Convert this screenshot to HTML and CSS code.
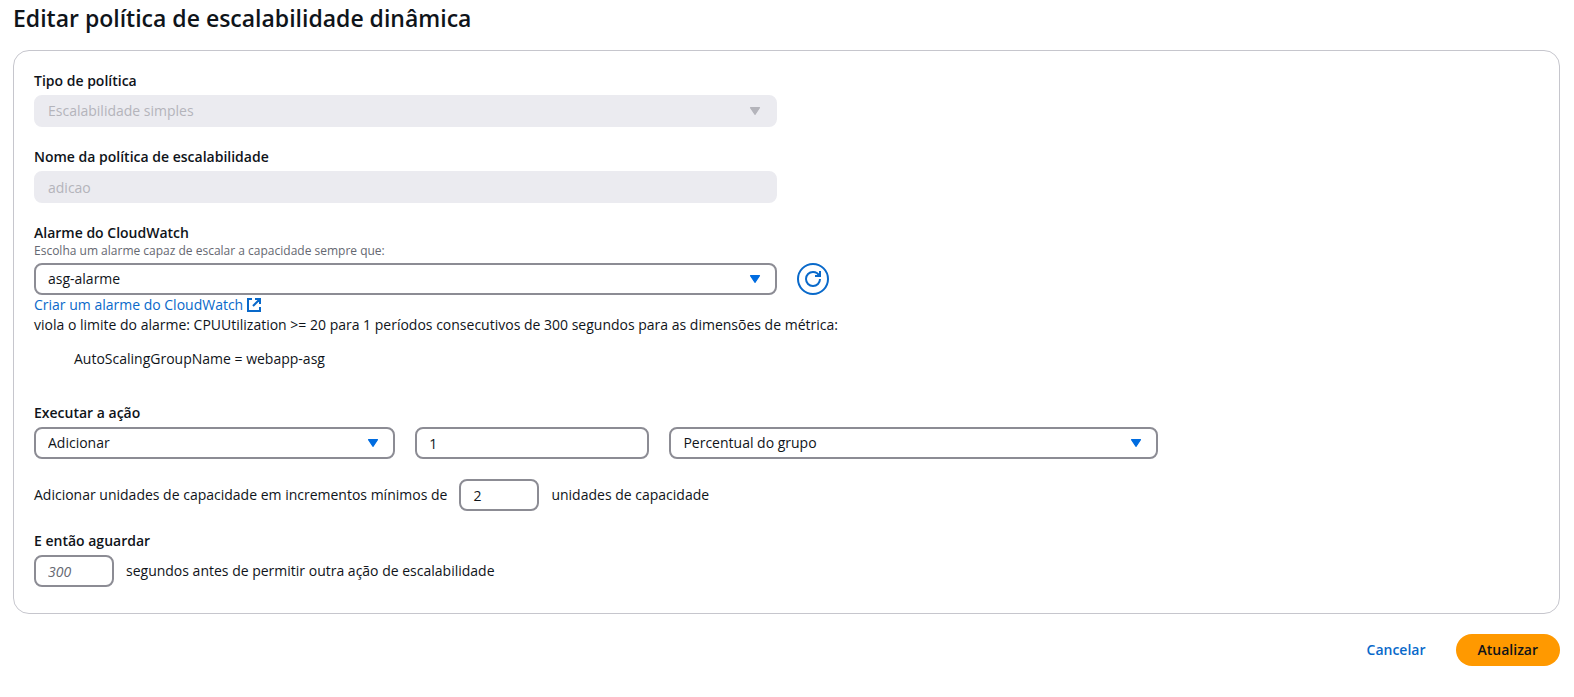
FILE: index.html
```html
<!DOCTYPE html>
<html lang="pt-BR">
<head>
<meta charset="utf-8">
<title>Editar política de escalabilidade dinâmica</title>
<link rel="stylesheet" href="styles.css">
</head>
<body>
<form class="page">
  <h1 class="title">Editar política de escalabilidade dinâmica</h1>
  <section class="panel">
    <div class="field">
      <label class="label" for="type">Tipo de política</label>
      <div class="row">
        <div class="select-box wide disabled">
          <select class="control" id="type" disabled><option>Escalabilidade simples</option></select>
          <svg class="caret" viewBox="0 0 16 16" aria-hidden="true"><path d="M4 5h8l-4 6z"/></svg>
        </div>
      </div>
    </div>
    <div class="field">
      <label class="label" for="name">Nome da política de escalabilidade</label>
      <div class="row">
        <input class="control wide" id="name" type="text" value="adicao" disabled>
      </div>
    </div>
    <div class="field alarm">
      <label class="label" for="alarm">Alarme do CloudWatch</label>
      <p class="hint">Escolha um alarme capaz de escalar a capacidade sempre que:</p>
      <div class="row">
        <div class="select-box wide">
          <select class="control" id="alarm"><option>asg-alarme</option></select>
          <svg class="caret" viewBox="0 0 16 16" aria-hidden="true"><path d="M4 5h8l-4 6z"/></svg>
        </div>
        <button class="refresh" type="button" aria-label="Atualizar alarmes">
          <svg viewBox="0 0 16 16" aria-hidden="true"><path d="M10 5h5V0"/><path d="M15 8a6.960 6.960 0 0 1-7 7 6.960 6.960 0 0 1-7-7 6.960 6.960 0 0 1 7-7 6.870 6.870 0 0 1 6.300 4"/></svg>
        </button>
      </div>
      <a class="link" href="#">Criar um alarme do CloudWatch <svg viewBox="0 0 14 14" aria-hidden="true"><path d="M5 1H1v12h12V9M8 1h5v5M13 1 6 8"/></svg></a>
      <p class="text">viola o limite do alarme: CPUUtilization &gt;= 20 para 1 períodos consecutivos de 300 segundos para as dimensões de métrica:</p>
      <p class="dimension">AutoScalingGroupName = webapp-asg</p>
    </div>
    <div class="field">
      <label class="label" for="action">Executar a ação</label>
      <div class="row">
        <div class="select-box action">
          <select class="control" id="action"><option>Adicionar</option></select>
          <svg class="caret" viewBox="0 0 16 16" aria-hidden="true"><path d="M4 5h8l-4 6z"/></svg>
        </div>
        <input class="control amount" type="text" value="1" aria-label="Quantidade">
        <div class="select-box unit">
          <select class="control" aria-label="Unidade"><option>Percentual do grupo</option></select>
          <svg class="caret" viewBox="0 0 16 16" aria-hidden="true"><path d="M4 5h8l-4 6z"/></svg>
        </div>
      </div>
    </div>
    <div class="field inline">
      <label for="step">Adicionar unidades de capacidade em incrementos mínimos de</label>
      <input class="control small" id="step" type="text" value="2">
      <span>unidades de capacidade</span>
    </div>
    <div class="field">
      <label class="label" for="wait">E então aguardar</label>
      <div class="inline">
        <input class="control small" id="wait" type="text" placeholder="300">
        <span>segundos antes de permitir outra ação de escalabilidade</span>
      </div>
    </div>
  </section>
  <footer class="actions">
    <button class="button" type="button">Cancelar</button>
    <button class="button primary" type="button">Atualizar</button>
  </footer>
</form>
</body>
</html>
```
FILE: styles.css
```css
* { box-sizing: border-box; }
body { margin: 0; background: #fff; color: #0f141a; font: 14px/20px "Open Sans", "Noto Sans", sans-serif; }
h1, p { margin: 0; }
.page { padding: 3px 14px 0 13px; }
.title { font-size: 23px; line-height: 30px; font-weight: 600; }
.panel { margin-top: 17px; padding: 20px 20px 26px; border: 1px solid #c6c6cd; border-radius: 16px; }
.field + .field { margin-top: 20px; }
.label { display: block; width: fit-content; font-weight: 600; margin-bottom: 4px; }
.alarm .label { margin-bottom: 0; }
.hint { color: #656871; font-size: 12px; line-height: 16px; margin-bottom: 4px; }
.control { display: block; width: 100%; height: 32px; padding: 4px 12px; border: 2px solid #8c8c94; border-radius: 8px; background: #fff; color: inherit; font: inherit; appearance: none; }
.control:disabled { opacity: 1; border-color: #ebebf0; background: #ebebf0; color: #b4b4bb; }
.control::placeholder { color: #656871; font-style: italic; opacity: 1; }
.select-box { display: grid; align-items: center; }
.select-box > * { grid-area: 1 / 1; }
.caret { justify-self: end; width: 18px; height: 18px; margin-right: 13px; fill: #006ce0; stroke: #006ce0; stroke-linejoin: round; pointer-events: none; }
.disabled .caret { fill: #b4b4bb; stroke: #b4b4bb; }
.row { display: grid; grid-template-columns: repeat(12, minmax(0, 1fr)); column-gap: 20px; }
.wide { grid-column: span 6; }
.action { grid-column: span 3; }
.amount { grid-column: span 2; }
.unit { grid-column: span 4; }
.control.small { width: 80px; }
.inline { display: flex; align-items: center; gap: 12px; }
.refresh { width: 32px; height: 32px; padding: 6px; border: 2px solid #0969ca; border-radius: 50%; background: #fff; }
.refresh svg { display: block; width: 16px; height: 16px; }
.refresh path, .link path { fill: none; stroke: #0969ca; stroke-width: 2; }
.link { display: flex; width: fit-content; align-items: center; gap: 4px; color: #0969ca; text-decoration: none; }
.link svg { width: 14px; height: 14px; }
.dimension { margin: 14px 0 0 40px; padding-bottom: 14px; }
.actions { display: flex; justify-content: flex-end; gap: 8px; margin-top: 20px; }
.button { height: 32px; padding: 4px 22px; border: 0; border-radius: 20px; background: transparent; color: #0969ca; font: inherit; font-weight: 600; }
.primary { background: #ff9900; color: #0f141a; }
```
